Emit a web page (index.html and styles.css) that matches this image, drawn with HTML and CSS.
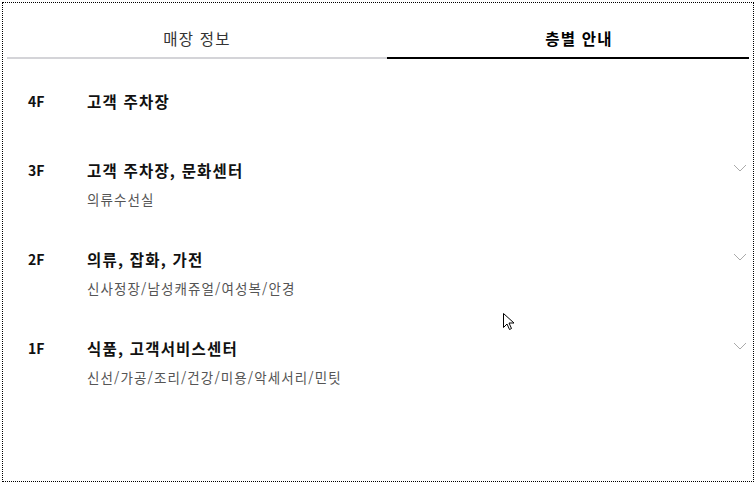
FILE: index.html
```html
<!DOCTYPE html>
<html lang="ko">
<head>
  <meta charset="UTF-8">
  <meta name="viewport" content="width=device-width, initial-scale=1.0">
  <title>층별 안내</title>
  <link rel="stylesheet" href="styles.css">
</head>
<body>

<div class="page">
  <div class="tabs">
    <a class="tab">매장 정보</a>
    <a class="tab active">층별 안내</a>
  </div>

  <ul class="floors">
    <li class="floor">
      <div class="level">4F</div>
      <div class="info">
        <div class="title">고객 주차장</div>
        <div class="sub"></div>
      </div>
    </li>
    <li class="floor">
      <div class="level">3F</div>
      <div class="info">
        <div class="title">고객 주차장, 문화센터</div>
        <div class="sub">의류수선실</div>
      </div>
      <svg class="chev" width="14" height="8" viewBox="0 0 14 8"><path d="M1 1l6 6 6-6" fill="none" stroke="#aaa" stroke-width="1"/></svg>
    </li>
    <li class="floor">
      <div class="level">2F</div>
      <div class="info">
        <div class="title">의류, 잡화, 가전</div>
        <div class="sub">신사정장/남성캐쥬얼/여성복/안경</div>
      </div>
      <svg class="chev" width="14" height="8" viewBox="0 0 14 8"><path d="M1 1l6 6 6-6" fill="none" stroke="#aaa" stroke-width="1"/></svg>
    </li>
    <li class="floor">
      <div class="level">1F</div>
      <div class="info">
        <div class="title">식품, 고객서비스센터</div>
        <div class="sub">신선/가공/조리/건강/미용/악세서리/민팃</div>
      </div>
      <svg class="chev" width="14" height="8" viewBox="0 0 14 8"><path d="M1 1l6 6 6-6" fill="none" stroke="#aaa" stroke-width="1"/></svg>
    </li>
  </ul>

  <svg class="cursor" width="14" height="20" viewBox="0 0 14 20"><path d="M0.5 0.5v14l3.5-3.5 2.5 5.5 2-1-2.5-5.5h5z" fill="#fff" stroke="#000" stroke-width="1"/></svg>
</div>

</body>
</html>
```

FILE: styles.css
```css
html, body {
  margin: 0;
  padding: 0;
  background: #fff;
}
body {
  padding: 2px;
  font-family: "Noto Sans CJK KR", "Noto Sans", sans-serif;
  color: #111;
}
.page {
  position: relative;
  box-sizing: border-box;
  width: 752px;
  height: 480px;
  border: 1px dotted #000;
  padding: 0 4px;
}
.tabs {
  display: flex;
}
.tab {
  flex: 0 0 380px;
  text-align: center;
  padding: 25px 0 9px;
  font-size: 15.5px;
  letter-spacing: 1.2px;
  line-height: 20px;
  color: #333;
  border-bottom: 2px solid #d4d4d8;
}
.tab.active {
  flex: 1;
  padding-left: 22px;
  color: #000;
  font-weight: bold;
  border-bottom-color: #000;
}
.floors {
  list-style: none;
  margin: 0;
  padding: 11px 0 0;
}
.floor {
  display: flex;
  align-items: flex-start;
  padding: 20px 2px 19px 21px;
}
.level {
  width: 59px;
  font-size: 14px;
  line-height: 22px;
  font-weight: bold;
}
.title {
  font-size: 15.5px;
  letter-spacing: 1.2px;
  line-height: 22px;
  font-weight: bold;
}
.sub {
  margin-top: 8px;
  font-size: 13.5px;
  letter-spacing: 1.1px;
  line-height: 20px;
  color: #555;
}
.chev {
  margin-left: auto;
  margin-top: 5px;
}
.cursor {
  position: absolute;
  left: 500px;
  top: 310px;
}
```
